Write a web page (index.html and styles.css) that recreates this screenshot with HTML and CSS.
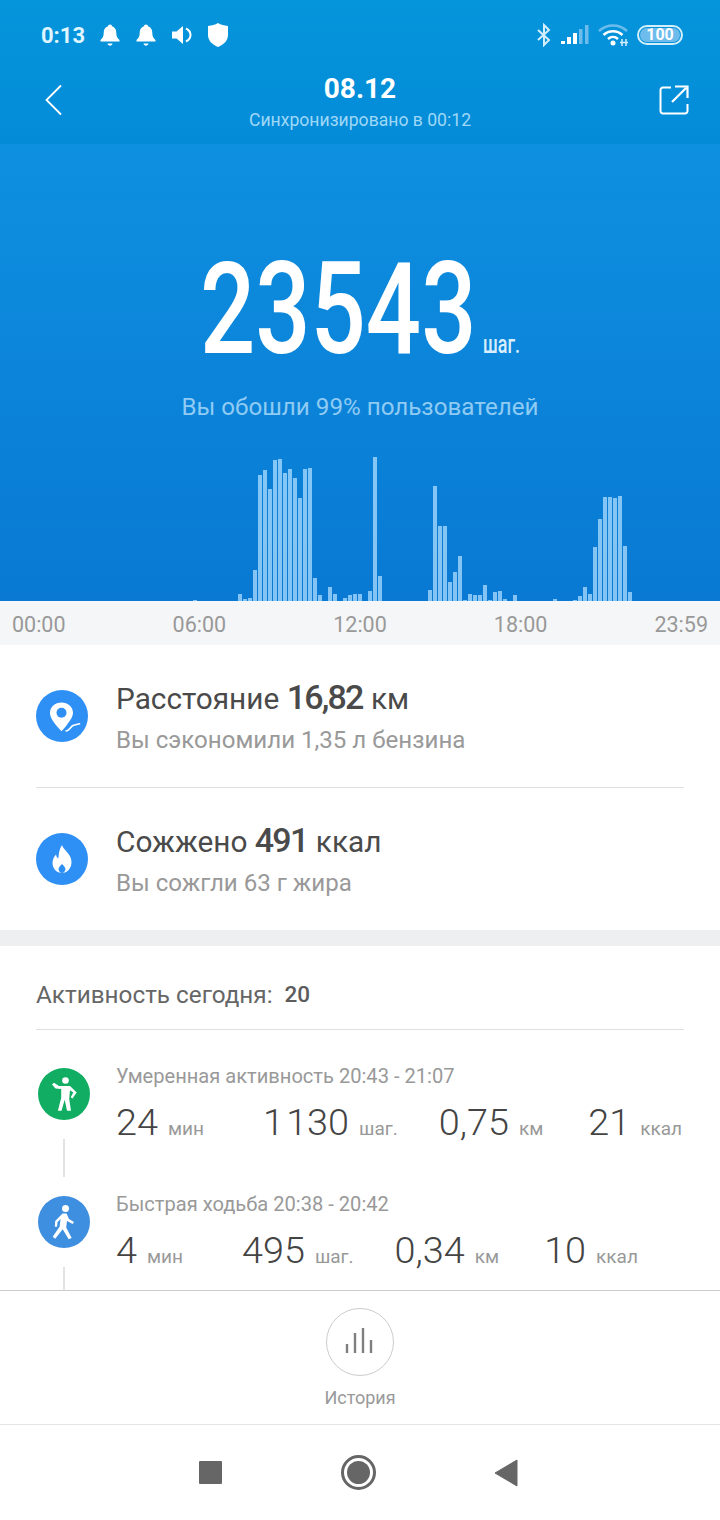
FILE: index.html
```html
<!DOCTYPE html>
<html lang="ru">
<head>
    <meta charset="UTF-8">
    <meta name="viewport" content="width=device-width, initial-scale=1.0">
    <title>Шаги</title>
    <link rel="stylesheet" href="styles.css">
</head>
<body>
<div class="phone">

    <header class="top">
        <div class="status">
            <div class="status-left">
                <span class="clock">0:13</span>
                <svg class="st-icon" width="22" height="24" viewBox="0 0 22 24"><path d="M11 1.500c1.200 0 2 .8 2 1.800 3 .9 4.300 3.400 4.300 6.400 0 3.600 1 5.300 3.200 7.300v1.500h-19v-1.500c2.200-2 3.200-3.700 3.200-7.300 0-3 1.300-5.500 4.300-6.400 0-1 .8-1.800 2-1.800zM8.500 20.500h5c-.3 1.400-1.200 2.200-2.500 2.200s-2.200-.8-2.500-2.200z" fill="#fff"/></svg>
                <svg class="st-icon" width="22" height="24" viewBox="0 0 22 24"><path d="M11 1.500c1.200 0 2 .8 2 1.800 3 .9 4.300 3.400 4.300 6.400 0 3.600 1 5.300 3.200 7.300v1.500h-19v-1.500c2.200-2 3.200-3.700 3.200-7.300 0-3 1.300-5.500 4.300-6.400 0-1 .8-1.800 2-1.800zM8.500 20.500h5c-.3 1.400-1.200 2.200-2.500 2.200s-2.200-.8-2.500-2.200z" fill="#fff"/></svg>
                <svg class="st-icon" width="22" height="24" viewBox="0 0 22 24"><path d="M1 8.500h4.500L12 3v18l-6.500-5.500H1z" fill="#fff"/><path d="M15 5.500c3 1.500 4.500 3.800 4.500 6.500s-1.500 5-4.500 6.500" fill="none" stroke="#fff" stroke-width="2"/></svg>
                <svg class="st-icon" width="22" height="26" viewBox="0 0 22 26"><path d="M11 1c3 1.800 6 2.600 10 2.900v9.100c0 5.500-4 9.500-10 12-6-2.500-10-6.500-10-12V3.900C5 3.600 8 2.800 11 1z" fill="#fff"/></svg>
            </div>
            <div class="status-right">
                <svg width="16" height="24" viewBox="0 0 16 24"><path d="M2 7l11 10-5 5V2l5 5L2 17" fill="none" stroke="#d5eefb" stroke-width="2"/></svg>
                <svg width="28" height="20" viewBox="0 0 28 20"><rect x="0" y="16" width="4" height="3" fill="#fff"/><rect x="6" y="12" width="4" height="7" fill="#fff"/><rect x="12" y="8" width="4" height="11" fill="#fff"/><rect x="18" y="4" width="3.500" height="15" fill="#6dbcec"/><rect x="24" y="0" width="3.500" height="19" fill="#6dbcec"/></svg>
                <svg width="30" height="24" viewBox="0 0 30 24"><path d="M1 8c8-7.500 20-7.500 28 0" fill="none" stroke="#6dbcec" stroke-width="2.500"/><path d="M5.500 12c5.500-5 13.500-5 19 0M10 16c3-2.700 7-2.700 10 0" fill="none" stroke="#fff" stroke-width="2.500"/><circle cx="15" cy="20" r="2.500" fill="#fff"/><path d="M24 16v7M28 16v7M22 19.500h8" stroke="#d5eefb" stroke-width="1.500" fill="none"/></svg>
                <span class="battery"><span class="battery-fill">100</span></span>
            </div>
        </div>
        <div class="nav">
            <svg class="nav-back" width="20" height="32" viewBox="0 0 20 32"><path d="M17 1.500L2.500 16 17 30.500" fill="none" stroke="#fff" stroke-width="1.800"/></svg>
            <div class="nav-title">
                <div class="nav-date">08.12</div>
                <div class="nav-sync">Синхронизировано в 00:12</div>
            </div>
            <svg class="nav-share" width="30" height="30" viewBox="0 0 30 30"><path d="M12 2.500H4a2.500 2.500 0 0 0-2.500 2.500v21A2.500 2.500 0 0 0 4 28.500h22a2.500 2.500 0 0 0 2.500-2.500v-7" fill="none" stroke="#fff" stroke-width="2"/><path d="M13 17L27 3M16 1.500h12.500V13" fill="none" stroke="#fff" stroke-width="2.200"/></svg>
        </div>
    </header>

    <section class="hero">
        <div class="steps">
            <span class="steps-num">23543</span>
            <span class="steps-unit">шаг.</span>
        </div>
        <div class="hero-note">Вы обошли 99% пользователей</div>
        <div class="chart">
            <span></span><span></span><span></span><span></span><span></span><span></span><span></span><span></span><span></span><span></span>
            <span></span><span></span><span></span><span></span><span></span><span></span><span></span><span></span><span></span><span></span>
            <span></span><span></span><span></span><span></span><span></span><span></span><span></span><span></span><span></span><span></span>
            <span></span><span></span><span></span><span></span><span></span><span></span><span></span><span></span>
            <span style="height:1px"></span><span></span><span></span><span></span><span></span><span></span><span></span><span></span><span></span>
            <span style="height:7px"></span><span style="height:2px"></span><span style="height:3px"></span><span style="height:31px"></span>
            <span style="height:126px"></span><span style="height:131px"></span><span style="height:112px"></span><span style="height:141px"></span>
            <span style="height:142px"></span><span style="height:128px"></span><span style="height:132px"></span><span style="height:123px"></span>
            <span style="height:103px"></span><span style="height:132px"></span><span style="height:133px"></span><span style="height:23px"></span>
            <span style="height:6px"></span><span></span><span style="height:14px"></span><span style="height:7px"></span><span></span>
            <span style="height:3px"></span><span style="height:6px"></span><span style="height:7px"></span><span style="height:7px"></span><span></span>
            <span style="height:10px"></span><span style="height:144px"></span><span style="height:25px"></span>
            <span></span><span></span><span></span><span></span><span></span><span></span><span></span><span></span><span></span>
            <span style="height:11px"></span><span style="height:115px"></span><span style="height:75px"></span><span style="height:75px"></span>
            <span style="height:19px"></span><span style="height:29px"></span><span style="height:45px"></span><span style="height:1px"></span>
            <span style="height:7px"></span><span style="height:6px"></span><span style="height:6px"></span><span style="height:16px"></span>
            <span style="height:1px"></span><span style="height:9px"></span><span style="height:10px"></span><span style="height:2px"></span><span></span>
            <span style="height:6px"></span><span></span><span></span><span></span><span></span><span></span><span></span><span></span>
            <span style="height:2px"></span><span></span><span></span><span></span>
            <span style="height:1px"></span><span style="height:5px"></span><span style="height:14px"></span><span style="height:7px"></span>
            <span style="height:54px"></span><span style="height:82px"></span><span style="height:104px"></span><span style="height:104px"></span>
            <span style="height:103px"></span><span style="height:105px"></span><span style="height:55px"></span><span style="height:9px"></span>
        </div>
    </section>

    <div class="axis">
        <span>00:00</span><span>06:00</span><span>12:00</span><span>18:00</span><span>23:59</span>
    </div>

    <section class="summary">
        <div class="summary-row">
            <svg class="round-icon" width="52" height="52" viewBox="0 0 52 52">
                <circle cx="26" cy="26" r="26" fill="#2e8ff5"/>
                <path d="M25.500 12.500c-6.500 0-11.500 4.600-11.500 10.400 0 5 4.500 11 11.500 18.300 2.500-2.700 4.500-5 6-7.200 3.500-4.800 5.500-8 5.500-11.100 0-5.800-5-10.400-11.500-10.400z" fill="#fff"/>
                <circle cx="25.500" cy="22.800" r="5" fill="#2e8ff5"/>
                <path d="M30 41c3.500 0 4-4 7-5.500l6.500-1.800" fill="none" stroke="#fff" stroke-width="1.600" stroke-linecap="round"/>
            </svg>
            <div class="summary-text">
                <div class="summary-main">Расстояние <b class="num">16,82</b> км</div>
                <div class="summary-sub">Вы сэкономили 1,35 л бензина</div>
            </div>
        </div>
        <div class="summary-row summary-row-last">
            <svg class="round-icon" width="52" height="52" viewBox="0 0 52 52">
                <circle cx="26" cy="26" r="26" fill="#2e8ff5"/>
                <path d="M26 12c1 5 9.500 8.500 9.500 17 0 6.500-4.500 11-9.500 11s-9.500-4-9.500-10c0-3.700 1.500-6.300 3.500-8.500.3 2 1 3.200 2.300 4 .5-5 1-10 3.700-13.500z" fill="#fff"/>
                <path d="M26 31c2.200 2 3.400 3.700 3.400 5.300 0 1.800-1.500 3.700-3.400 3.700s-3.400-1.900-3.400-3.700c0-1.600 1.200-3.300 3.400-5.300z" fill="#2e8ff5"/>
            </svg>
            <div class="summary-text">
                <div class="summary-main">Сожжено <b class="num">491</b> ккал</div>
                <div class="summary-sub">Вы сожгли 63 г жира</div>
            </div>
        </div>
    </section>

    <section class="activity">
        <div class="activity-head">Активность сегодня:<span class="activity-count">20</span></div>
        <div class="activity-list">
            <div class="activity-item">
                <div class="timeline">
                    <svg width="52" height="52" viewBox="0 0 52 52">
                        <circle cx="26" cy="26" r="26" fill="#11ad63"/>
                        <circle cx="27.500" cy="12.500" r="3.300" fill="#fff"/>
                        <path d="M14 16.500l2-1.800 5 3.200h11l6.700 6.500-4.200 6.100-1.800-1.300 2.600-4.600-3.300-2.300-.8 8.500 1.800 12h-4l-2.300-11-3.200 11h-3.600l3.300-13V21l-5.700-.4z" fill="#fff"/>
                    </svg>
                    <i class="timeline-line"></i>
                </div>
                <div class="activity-body">
                    <div class="activity-title">Умеренная активность 20:43 - 21:07</div>
                    <div class="activity-stats">
                        <span class="stat"><b>24</b><small>мин</small></span>
                        <span class="stat"><b class="grouped">1 130</b><small>шаг.</small></span>
                        <span class="stat"><b>0,75</b><small>км</small></span>
                        <span class="stat"><b>21</b><small>ккал</small></span>
                    </div>
                </div>
            </div>
            <div class="activity-item">
                <div class="timeline">
                    <svg width="52" height="52" viewBox="0 0 52 52">
                        <circle cx="26" cy="26" r="26" fill="#3f8fe0"/>
                        <circle cx="27.500" cy="12.500" r="3.500" fill="#fff"/>
                        <path d="M24.500 17.500h4l2.500 5.500 5 3-1.300 2-5.700-3-.8 6.500 5.500 10.500-3 1.300-6-10-7.500 9.500-2.500-2 7-10.300.8-7.500-3 3.300-.4 4.500h-2.300l.4-5.800z" fill="#fff"/>
                    </svg>
                    <i class="timeline-line"></i>
                </div>
                <div class="activity-body">
                    <div class="activity-title">Быстрая ходьба 20:38 - 20:42</div>
                    <div class="activity-stats">
                        <span class="stat"><b>4</b><small>мин</small></span>
                        <span class="stat"><b>495</b><small>шаг.</small></span>
                        <span class="stat"><b>0,34</b><small>км</small></span>
                        <span class="stat"><b>10</b><small>ккал</small></span>
                    </div>
                </div>
            </div>
        </div>
    </section>

    <section class="history">
        <div class="history-btn">
            <svg width="30" height="28" viewBox="0 0 30 28"><path d="M2 25v-9M10 25V5M18 25V0M26 25V12" fill="none" stroke="#7f7f7f" stroke-width="2.400"/></svg>
        </div>
        <div class="history-label">История</div>
    </section>

    <nav class="softkeys">
        <span class="key-square"></span>
        <span class="key-circle"><span></span></span>
        <svg width="24" height="28" viewBox="0 0 24 28"><path d="M23 1v26L1 14z" fill="#666" stroke="#666" stroke-linejoin="round"/></svg>
    </nav>

</div>
</body>
</html>
```

FILE: styles.css
```css
* {
    box-sizing: border-box;
}
body {
    margin: 0;
    background-color: #fff;
    font-family: Roboto, "Noto Sans", sans-serif;
}
.phone {
    width: 720px;
    height: 1520px;
    overflow: hidden;
    display: flex;
    flex-direction: column;
}

/* header */
.top {
    height: 144px;
    background: linear-gradient(#0595db, #048bd8);
    color: #fff;
    padding-top: 21px;
}
.status {
    display: flex;
    justify-content: space-between;
    align-items: center;
    height: 28px;
    padding: 0 37px 0 41px;
}
.status-left {
    display: flex;
    align-items: center;
}
.clock {
    font-size: 22px;
    font-weight: 700;
    color: #dff5ff;
    margin-right: 14px;
}
.st-icon {
    margin-right: 14px;
}
.status-right {
    display: flex;
    align-items: center;
    gap: 9px;
}
.battery {
    width: 46px;
    height: 20px;
    border: 2px solid #d5eefb;
    border-radius: 10px;
    padding: 1px;
    display: flex;
}
.battery-fill {
    flex: 1;
    background-color: #6dbcec;
    border-radius: 7px;
    font-size: 16px;
    font-weight: 700;
    line-height: 14px;
    text-align: center;
    color: #fff;
}
.nav {
    display: grid;
    grid-template-columns: 1fr auto 1fr;
    align-items: center;
    margin-top: 23px;
}
.nav-back {
    margin: 0 0 6px 44px;
}
.nav-share {
    justify-self: end;
    margin: 0 31px 6px 0;
}
.nav-title {
    text-align: center;
}
.nav-date {
    font-size: 28px;
    font-weight: 700;
    line-height: 34px;
}
.nav-sync {
    font-size: 17.6px;
    line-height: 28px;
    color: #9fd8f7;
}

/* big number and chart */
.hero {
    height: 457px;
    background: linear-gradient(#0e90e0, #0979d3);
    display: flex;
    flex-direction: column;
}
.steps {
    margin-top: 100px;
    height: 130px;
    display: flex;
    align-items: baseline;
    padding-left: 200px;
}
.steps-num {
    display: inline-block;
    font-size: 128px;
    font-weight: 500;
    line-height: 130px;
    color: #fff;
    transform: scaleX(0.76);
    transform-origin: left;
    margin-right: -81px;
}
.steps-unit {
    display: inline-block;
    font-size: 25px;
    font-weight: 500;
    color: #d8eefd;
    transform: scaleX(0.72);
    transform-origin: left;
}
.hero-note {
    margin-top: 19px;
    text-align: center;
    font-size: 24.2px;
    color: #8fcbf3;
}
.chart {
    margin-top: auto;
    height: 144px;
    display: flex;
    align-items: flex-end;
    gap: 1px;
    padding-left: 3px;
}
.chart span {
    width: 4px;
    background-color: rgba(175, 222, 255, 0.74);
}
.axis {
    height: 44px;
    background-color: #f5f6f7;
    display: flex;
    justify-content: space-between;
    align-items: center;
    padding: 3px 12px 0;
    font-size: 21.5px;
    color: #999;
}

/* distance and calories */
.summary {
    height: 301px;
    padding: 0 36px;
    border-bottom: 16px solid #eeeff0;
}
.summary-row {
    height: 143px;
    display: flex;
    align-items: center;
    gap: 28px;
    border-bottom: 1px solid #e0e0e0;
}
.summary-row-last {
    border-bottom: none;
    height: 142px;
}
.summary-main {
    font-size: 29.8px;
    line-height: 36px;
    color: #4a4a4a;
}
.num {
    font-weight: 500;
    font-size: 34px;
    letter-spacing: -1.8px;
    margin-right: 1px;
}
.summary-sub {
    margin-top: 9px;
    font-size: 24.1px;
    line-height: 28px;
    color: #999;
}

/* activity list */
.activity {
    height: 344px;
    padding: 0 36px;
    overflow: hidden;
}
.activity-head {
    height: 84px;
    display: flex;
    align-items: center;
    padding-top: 13px;
    font-size: 24.3px;
    color: #666;
    border-bottom: 1px solid #e0e0e0;
}
.activity-count {
    margin-left: 12px;
    font-weight: 500;
    font-size: 22.5px;
    color: #5c5c5c;
}
.activity-list {
    padding-top: 38px;
}
.activity-item {
    display: flex;
    height: 128px;
}
.timeline {
    width: 80px;
    padding-left: 2px;
    flex-shrink: 0;
}
.timeline svg {
    display: block;
}
.timeline-line {
    display: block;
    width: 2px;
    height: 38px;
    margin: 19px 0 0 25px;
    background-color: #e3e3e3;
}
.activity-title {
    font-size: 20.1px;
    line-height: 20px;
    margin-top: -2px;
    color: #999;
}
.activity-stats {
    display: flex;
    gap: 41px;
    margin-top: 14px;
}
.stat:first-child {
    margin-right: 18px;
}
.stat:nth-child(3) {
    margin-right: 4px;
}
.stat b {
    font-weight: 300;
    font-size: 37.8px;
    color: #444;
}
.stat b.grouped {
    word-spacing: -7px;
}
.stat small {
    margin-left: 10px;
    font-size: 19px;
    color: #999;
}

/* bottom */
.history {
    height: 135px;
    border-top: 1px solid #ccc;
    border-bottom: 1px solid #e5e5e5;
    display: flex;
    flex-direction: column;
    align-items: center;
    padding-top: 17px;
}
.history-btn {
    width: 68px;
    height: 68px;
    border: 1px solid #ccc;
    border-radius: 50%;
    display: flex;
    align-items: center;
    justify-content: center;
}
.history-label {
    margin-top: 11px;
    font-size: 18px;
    color: #999;
}
.softkeys {
    flex: 1;
    display: flex;
    align-items: center;
    justify-content: space-between;
    padding: 0 202px 0 199px;
}
.key-square {
    width: 23px;
    height: 23px;
    border-radius: 1px;
    background-color: #666;
}
.key-circle {
    width: 35px;
    height: 35px;
    border: 3px solid #666;
    border-radius: 50%;
    padding: 3px;
    display: block;
    margin-left: 1px;
}
.key-circle span {
    display: block;
    width: 100%;
    height: 100%;
    border-radius: 50%;
    background-color: #666;
}
```
